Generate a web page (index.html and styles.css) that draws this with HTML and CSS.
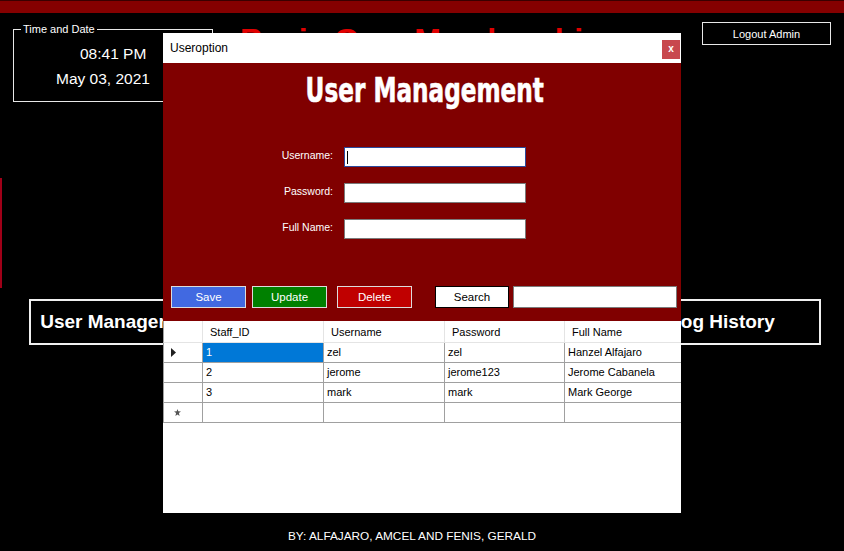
FILE: index.html
```html
<!DOCTYPE html>
<html lang="en">
<head>
<meta charset="utf-8">
<title>Useroption</title>
<link rel="stylesheet" href="styles.css">
</head>
<body>
<div class="app">
  <div class="topbar"></div>
  <header class="header">
    <fieldset class="clock">
      <legend>Time and Date</legend>
      <div class="time">08:41 PM</div>
      <div class="date">May 03, 2021</div>
    </fieldset>
    <h1 class="brand">Basic Gym Membership</h1>
    <button class="logout">Logout Admin</button>
  </header>
  <div class="stage">
    <div class="side-strip"></div>
    <nav class="nav">
      <div class="nav-box box-user">User Management</div>
      <div class="nav-box box-log">Log History</div>
    </nav>
  </div>
  <footer class="footer">BY: ALFAJARO, AMCEL AND FENIS, GERALD</footer>
</div>

<div class="dialog">
  <div class="titlebar">
    <span class="win-title">Useroption</span>
    <span class="close">x</span>
  </div>
  <div class="panel">
    <h2 class="panel-title"><span class="panel-title-text">User Management</span></h2>
    <div class="form">
      <label class="lbl">Username:</label>
      <div class="field focused"><span class="caret"></span></div>
      <label class="lbl">Password:</label>
      <div class="field"></div>
      <label class="lbl">Full Name:</label>
      <div class="field"></div>
    </div>
    <div class="actions">
      <button class="btn btn-save">Save</button>
      <button class="btn btn-update">Update</button>
      <button class="btn btn-delete">Delete</button>
      <button class="btn-search">Search</button>
      <div class="search-field"></div>
    </div>
  </div>
  <div class="grid">
    <div class="row head">
      <div class="c rh"></div>
      <div class="c">Staff_ID</div>
      <div class="c">Username</div>
      <div class="c">Password</div>
      <div class="c">Full Name</div>
    </div>
    <div class="row">
      <div class="c rh"><svg class="arrow" width="6" height="9" viewBox="0 0 6 9"><path d="M0 0 L5 4.5 L0 9 Z" fill="#202020"/></svg></div>
      <div class="c sel">1</div>
      <div class="c">zel</div>
      <div class="c">zel</div>
      <div class="c">Hanzel Alfajaro</div>
    </div>
    <div class="row">
      <div class="c rh"></div>
      <div class="c">2</div>
      <div class="c">jerome</div>
      <div class="c">jerome123</div>
      <div class="c">Jerome Cabanela</div>
    </div>
    <div class="row">
      <div class="c rh"></div>
      <div class="c">3</div>
      <div class="c">mark</div>
      <div class="c">mark</div>
      <div class="c">Mark George</div>
    </div>
    <div class="row">
      <div class="c rh"><svg class="star" width="7" height="7" viewBox="0 0 7 7"><path d="M3.5 0 L4.3 2.2 L7 2.4 L4.9 4.1 L5.6 7 L3.5 5.4 L1.4 7 L2.1 4.1 L0 2.4 L2.7 2.2 Z" fill="#555"/></svg></div>
      <div class="c"></div>
      <div class="c"></div>
      <div class="c"></div>
      <div class="c"></div>
    </div>
  </div>
</div>
</body>
</html>
```

FILE: styles.css
```css
* { box-sizing: border-box; }
html, body {
  margin: 0;
  padding: 0;
  width: 844px;
  height: 551px;
  overflow: hidden;
  background: #000;
  font-family: "Liberation Sans", Arial, sans-serif;
  color: #fff;
}
.app {
  width: 844px;
  height: 551px;
  display: flex;
  flex-direction: column;
}
.topbar {
  height: 13px;
  background: #850000;
  border-top: 1px solid #3a0000;
  flex: none;
}
.header {
  display: flex;
  align-items: flex-start;
  flex: none;
}
.clock {
  margin: 10px 0 0 13px;
  padding: 0 0 0 7px;
  width: 200px;
  height: 79px;
  border: 1px solid #e8e8e8;
}
.clock legend {
  font-size: 11px;
  line-height: 13px;
  padding: 0 2px;
}
.time {
  font-size: 15.5px;
  line-height: 20px;
  margin: 8px 0 0 59px;
}
.date {
  font-size: 15.5px;
  line-height: 20px;
  margin: 5px 0 0 35px;
}
.brand {
  margin: 11px 0 0 27px;
  font-size: 32px;
  line-height: 32px;
  font-weight: bold;
  color: #e00000;
  white-space: nowrap;
}
.logout {
  margin: 9px 13px 0 auto;
  width: 129px;
  height: 23px;
  background: #000;
  color: #fff;
  border: 1px solid #e8e8e8;
  font-family: "Liberation Sans", Arial, sans-serif;
  font-size: 11px;
  padding: 0;
}
.stage {
  display: flex;
  align-items: flex-start;
  flex: none;
}
.side-strip {
  width: 2px;
  height: 110px;
  margin-top: 76px;
  background: #a00018;
  flex: none;
}
.nav {
  margin: 197px 0 0 27px;
  width: 792px;
  display: flex;
  justify-content: space-between;
}
.nav-box {
  height: 46px;
  border: 2px solid #f0f0f0;
  display: flex;
  align-items: center;
  justify-content: center;
  font-size: 19px;
  font-weight: bold;
  white-space: nowrap;
}
.box-user { width: 186px; }
.box-log { width: 198px; }
.footer {
  margin-top: auto;
  padding: 0 20px 8px 0;
  text-align: center;
  font-size: 11.8px;
  line-height: 14px;
}

/* dialog */
.dialog {
  position: absolute;
  left: 163px;
  top: 33px;
  width: 518px;
  height: 480px;
  background: #fff;
  overflow: hidden;
}
.titlebar {
  height: 30px;
  display: flex;
  align-items: center;
  justify-content: space-between;
  padding-left: 7px;
  color: #000;
}
.win-title {
  font-size: 12px;
}
.close {
  align-self: flex-start;
  margin: 7px 1px 0 0;
  width: 18px;
  height: 19px;
  background: #c8484e;
  color: #fff;
  font-size: 10px;
  font-weight: bold;
  line-height: 18px;
  text-align: center;
}
.panel {
  height: 258px;
  background: #800000;
  padding-top: 8px;
}
.panel-title {
  margin: 0;
  text-align: center;
  font-family: "DejaVu Sans Condensed", "DejaVu Sans", sans-serif;
  font-weight: bold;
  font-size: 33px;
  line-height: 40px;
  color: #fff;
}
.panel-title-text {
  display: inline-block;
  transform: scaleX(0.78);
  -webkit-text-stroke: 0.6px #fff;
  margin-left: 5px;
}
.form {
  margin-top: 36px;
  display: grid;
  grid-template-columns: 170px 182px;
  grid-auto-rows: 20px;
  column-gap: 11px;
  row-gap: 16px;
}
.lbl {
  justify-self: end;
  align-self: center;
  font-size: 10.5px;
  line-height: 13px;
  margin-top: -3px;
}
.field {
  background: #fff;
  border: 1px solid #7a7a7a;
  display: flex;
  align-items: center;
}
.field.focused { border-color: #2c4a9c; }
.caret {
  width: 1px;
  height: 13px;
  background: #000;
  margin-left: 2px;
}
.actions {
  margin-top: 47px;
  padding-left: 8px;
  display: flex;
  align-items: center;
}
.btn {
  width: 75px;
  height: 22px;
  border: 1px solid #dcdcdc;
  color: #fff;
  font-family: "Liberation Sans", Arial, sans-serif;
  font-size: 11.5px;
  padding: 0;
}
.btn-save { background: #4169e1; }
.btn-update { background: #008000; margin-left: 6px; }
.btn-delete { background: #c00000; margin-left: 10px; }
.btn-search {
  margin-left: 23px;
  width: 74px;
  height: 22px;
  background: #fff;
  border: 1px solid #000;
  color: #000;
  font-family: "Liberation Sans", Arial, sans-serif;
  font-size: 11.5px;
  padding: 0;
}
.search-field {
  margin-left: 4px;
  width: 164px;
  height: 22px;
  background: #fff;
  border: 1px solid #7a7a7a;
}
.grid {
  color: #000;
  font-size: 11px;
}
.row {
  display: grid;
  grid-template-columns: 40px 121px 121px 120px 140px;
  height: 20px;
}
.row.head { height: 22px; }
.c {
  border-right: 1px solid #a0a0a0;
  border-bottom: 1px solid #a0a0a0;
  padding-left: 3px;
  line-height: 19px;
  white-space: nowrap;
}
.row.head .c {
  border-right-color: #e4e4e4;
  border-bottom-color: #e4e4e4;
  padding: 1px 0 0 7px;
  line-height: 20px;
}
.c.rh {
  border-left: 1px solid #a0a0a0;
  display: flex;
  align-items: center;
  padding-left: 7px;
}
.row.head .c.rh { border-left-color: #a0a0a0; }
.c.sel {
  background: #0078d7;
  color: #fff;
}
.star { margin-left: 3px; }
```
